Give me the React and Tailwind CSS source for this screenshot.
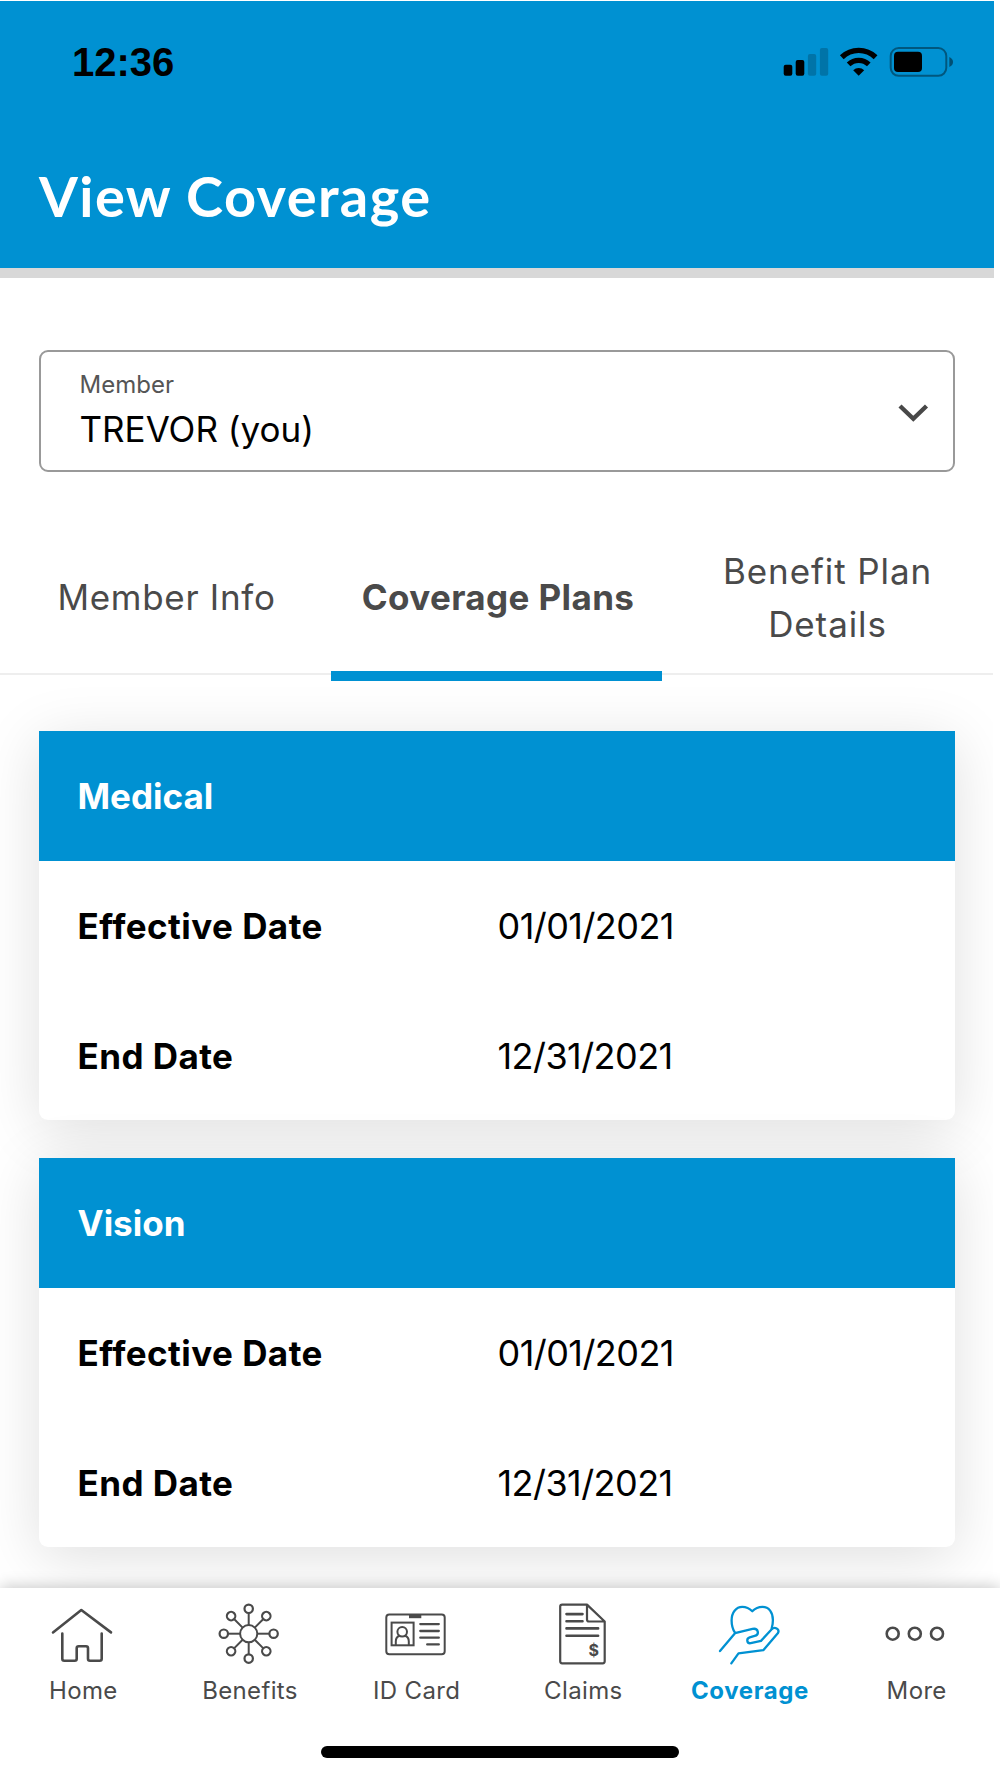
/**
 * View Coverage — member coverage plans screen with bottom navigation.
 */
const plans = [
  { name: 'Medical', effective: '01/01/2021', end: '12/31/2021' },
  { name: 'Vision', effective: '01/01/2021', end: '12/31/2021' },
]

const spokes = [0, 45, 90, 135, 180, 225, 270, 315]

const StatusIcons = () => (
  <svg className="w-[180px] h-10" viewBox="780 40 180 40" fill="none">
    {/* Signal */}
    <rect x="783.7" y="63.7" width="8.6" height="11" rx="2" fill="#000" />
    <rect x="795.7" y="59" width="8.6" height="15.7" rx="2" fill="#000" />
    <rect x="807.9" y="53" width="8.3" height="21.7" rx="2" fill="#000" fillOpacity="0.2" />
    <rect x="819.9" y="47" width="8.3" height="27.7" rx="2" fill="#000" fillOpacity="0.2" />
    {/* Wi-Fi */}
    <path d="M841.8 56.2a24.4 24.4 0 0 1 33.8 0" stroke="#000" strokeWidth="5.4" />
    <path d="M848.6 63.4a14.6 14.6 0 0 1 20.2 0" stroke="#000" strokeWidth="5.2" />
    <path d="M853.2 69.2a8 8 0 0 1 11 0l-5.5 5.6Z" fill="#000" />
    {/* Battery */}
    <rect x="890.7" y="47" width="55.6" height="27.8" rx="8" stroke="#000" strokeOpacity="0.4" strokeWidth="2" />
    <rect x="894" y="50.7" width="28" height="20.4" rx="4" fill="#000" />
    <path d="M949.3 56c5 2 5 8 0 10Z" fill="#000" fillOpacity="0.45" />
  </svg>
)

const HomeIcon = () => (
  <svg className="w-16 h-16" viewBox="0 0 64 64" fill="none" stroke="currentColor" strokeWidth="2.6" strokeLinecap="round" strokeLinejoin="round">
    <path d="M2 30.4 30.3 8 60 30.4" />
    <path d="M11.3 31.5V56.7q0 2 2 2H23.7q2 0 2-2V46.3q0-2 2-2H35q2 0 2 2V56.7q0 2 2 2h9.7q2 0 2-2V31.5" />
  </svg>
)

const BenefitsIcon = () => (
  <svg className="w-16 h-16" viewBox="0 0 64 64" fill="none" stroke="currentColor" strokeWidth="2">
    <circle cx="30.7" cy="31.7" r="8.6" />
    {spokes.map((deg) => (
      <g key={deg} transform={`rotate(${deg} 30.7 31.7)`}>
        <path d="M30.7 23.1V11" />
        <circle cx="30.7" cy="6.8" r="4.2" strokeWidth="2.2" />
      </g>
    ))}
  </svg>
)

const CardIcon = () => (
  <svg className="w-16 h-16" viewBox="0.7 0 64 64" fill="none" stroke="currentColor" strokeWidth="2" strokeLinecap="round">
    <rect x="2" y="12.6" width="58.4" height="39.6" rx="3" />
    <path d="M24.7 13h12.3v3.2h-12.3Z" fill="currentColor" stroke="none" />
    <rect x="7.3" y="20.6" width="22" height="22.7" />
    <circle cx="17.9" cy="29.8" r="4.8" />
    <path d="M11.5 43v-3.5q0-4.5 3.6-5.8M24.5 43v-3.5q0-4.5-3.6-5.8" />
    <path d="M36 22.1h18.5M36 29h18.5M36 35.7h18.5M42.9 42.4h11.6" strokeWidth="2.3" />
  </svg>
)

const ClaimsIcon = () => (
  <svg className="w-16 h-16" viewBox="0 0 64 64" fill="none" stroke="currentColor" strokeWidth="2.2" strokeLinecap="round" strokeLinejoin="round">
    <path d="M36 2.6H11.2q-2 0-2 2V59.3q0 2 2 2H51.7q2 0 2-2V19.5L36 2.6V17.5q0 2 2 2H53.7" />
    <path d="M15.5 12.1h16M15.5 19.3h16M15.5 26.4h31.6M15.5 33.7h31.6" strokeWidth="2.6" />
    <text x="42.9" y="53.8" textAnchor="middle" fontSize="16" fontWeight="700" fill="currentColor" stroke="none">$</text>
  </svg>
)

const CoverageIcon = () => (
  <svg className="w-16 h-16" viewBox="0 0 64 64" fill="none" stroke="currentColor" strokeWidth="2.3" strokeLinecap="round" strokeLinejoin="round">
    <path d="M17 30.7C14.5 27 13.6 22.5 13.6 18.5C13.6 10.5 18 4.9 24.3 4.9C28.5 4.9 31.5 6.5 34.3 9.3C37 6.5 40.5 4.9 44.5 4.9C51 4.9 54.9 10.5 54.9 18C54.9 21 54.5 23.7 53.7 26.3" />
    <path d="M2 49 17 31.2 34.5 26.9C40.5 25.7 41.7 32.5 36.7 33.9L31.7 35.4C28 36.7 28.8 41.7 32.7 41.2L43 38.9L53.7 27.3C56.5 24.3 62 26.8 60 30.9L45.3 48.2L20.5 51.3L13.3 61.3" />
  </svg>
)

const MoreIcon = () => (
  <svg className="w-16 h-16" viewBox="0 0 64 64" fill="none" stroke="currentColor" strokeWidth="2.6">
    <circle cx="7.700" cy="31.7" r="6" />
    <circle cx="29.8" cy="31.7" r="6" />
    <circle cx="52" cy="31.7" r="6" />
  </svg>
)

const navItems = [
  { label: 'Home', Icon: HomeIcon },
  { label: 'Benefits', Icon: BenefitsIcon },
  { label: 'ID Card', Icon: CardIcon },
  { label: 'Claims', Icon: ClaimsIcon },
  { label: 'Coverage', Icon: CoverageIcon, active: true },
  { label: 'More', Icon: MoreIcon },
]

const PlanCard = ({ plan }) => (
  <section className="rounded-b-[9px] bg-white shadow-[0_10px_60px_rgba(0,0,0,0.13)]">
    <h2 className="flex h-[130px] items-center bg-[#0091d2] pl-[39px] text-[35px] font-bold text-white">{plan.name}</h2>
    <dl>
      <div className="flex h-[130px] items-center pl-[39px]">
        <dt className="w-[420px] text-[35px] font-bold tracking-[0.45px]">Effective Date</dt>
        <dd className="tracking-[-0.55px]">{plan.effective}</dd>
      </div>
      <div className="flex h-[129px] items-center pl-[39px]">
        <dt className="w-[420px] pt-px text-[35px] font-bold tracking-[0.45px]">End Date</dt>
        <dd className="tracking-[-0.55px]">{plan.end}</dd>
      </div>
    </dl>
  </section>
)

export default function App() {
  return (
    <div className="flex h-[1778px] w-[1000px] flex-col overflow-hidden bg-white pt-px font-['Inter',sans-serif] text-black">
      <header className="flex h-[277px] w-[994px] shrink-0 flex-col border-b-[10px] border-[#d8d8d8] bg-[#0091d2]">
        <div className="flex h-[120px] items-center justify-between pl-[72px] pr-[34px]">
          <span className="pt-0.5 font-['Liberation_Sans',sans-serif] text-[40px] font-bold">12:36</span>
          <StatusIcons />
        </div>
        <h1 className="pt-[39px] pl-[39px] font-['Lato',sans-serif] text-[56px] font-bold leading-[72px] tracking-[1.4px] text-white">View Coverage</h1>
      </header>

      <main className="flex w-[993px] flex-1 flex-col overflow-hidden">
        <button className="mr-[38px] ml-[38.5px] mt-[72px] flex h-[122px] shrink-0 items-center justify-between rounded-[9px] border-2 border-[#999] pr-6 pl-[39px] text-left">
          <span className="flex flex-col pt-0.5">
            <span className="pt-px text-2xl leading-[34px] text-[#555]">Member</span>
            <span className="text-[35px] leading-[55px]">TREVOR (you)</span>
          </span>
          <svg className="h-8 w-8" viewBox="0 0 32 32" fill="none" stroke="#484848" strokeWidth="4.4">
            <path d="m3 11 13.3 12.8L29.5 11" />
          </svg>
        </button>

        <nav className="mt-[49px] grid h-[160px] shrink-0 grid-cols-3 items-start text-center text-[35px] leading-[53px] text-[#4a4a4a]">
          <div className="flex h-[154px] items-center justify-center border-b-2 border-[#eee] pl-0.5 tracking-[0.7px]">Member Info</div>
          <div className="flex h-[160px] items-center justify-center border-b-[10px] border-[#0091d2] pt-0.5 pl-[3px] font-bold tracking-[0.4px]">Coverage Plans</div>
          <div className="flex h-[154px] items-center justify-center border-b-2 border-[#eee] px-8 pt-px tracking-[0.9px]">Benefit Plan Details</div>
        </nav>

        <div className="flex flex-1 flex-col gap-[38px] overflow-hidden pr-[38px] pl-[38.5px] pt-[50px] text-[36px]">
          {plans.map((plan) => <PlanCard key={plan.name} plan={plan} />)}
        </div>
      </main>

      <footer className="relative h-[190px] shrink-0 bg-white shadow-[0_-2px_14px_rgba(0,0,0,0.2)]">
        <nav className="grid grid-cols-6 pt-[14px]">
          {navItems.map(({ label, Icon, active }) => (
            <a key={label} className={active ? 'flex flex-col items-center font-bold tracking-[0.6px] text-[#0091d2]' : 'flex flex-col items-center tracking-[0.35px] text-[#4a4a4a]'}>
              <Icon />
              <span className="mt-[7px] text-2xl leading-9">{label}</span>
            </a>
          ))}
        </nav>
        <div className="mx-auto mt-[37px] h-3 w-[358px] rounded-full bg-black" />
      </footer>
    </div>
  )
}
